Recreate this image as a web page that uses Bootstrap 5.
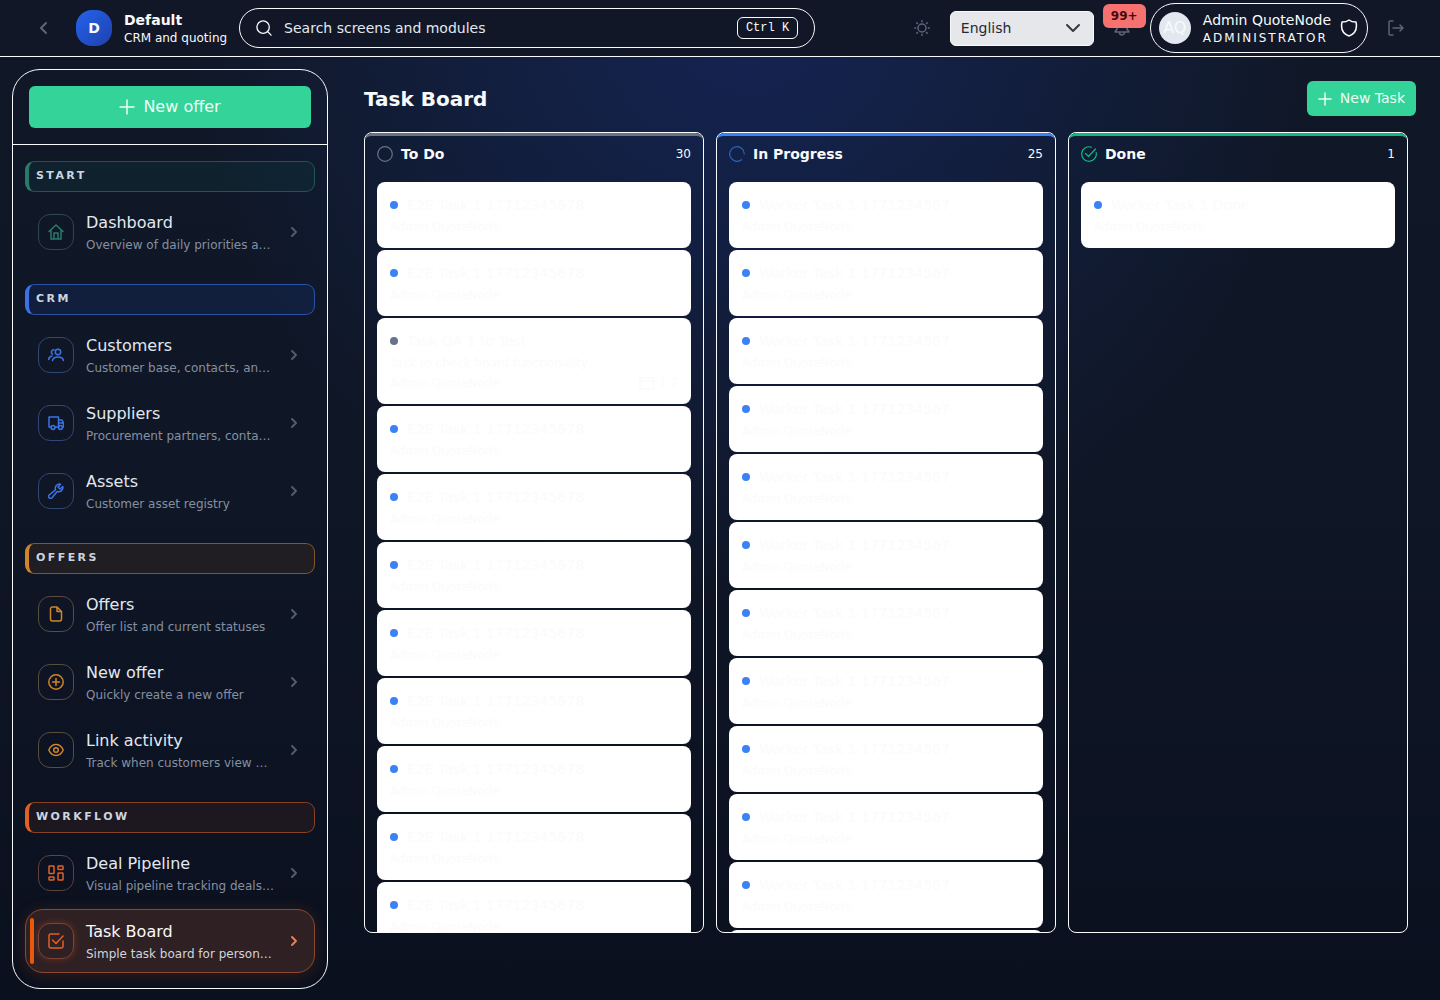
<!DOCTYPE html>
<html lang="en">
<head>
<meta charset="utf-8">
<meta name="viewport" content="width=device-width, initial-scale=1">
<title>Task Board</title>
<link href="https://cdn.jsdelivr.net/npm/bootstrap@5.3.0/dist/css/bootstrap.min.css" rel="stylesheet">
<style>
:root{--ink:#f8fafc;--line:#f8fafc}
body{font-family:"DejaVu Sans",sans-serif;font-size:14px;line-height:20px;color:var(--ink);background:radial-gradient(ellipse 560px 600px at 52% 0,rgba(30,64,175,.32),transparent),linear-gradient(#101828,#0f1626 50%,#0a101e)}
svg{fill:none;stroke:currentColor;stroke-width:1.5;stroke-linecap:round;stroke-linejoin:round;flex-shrink:0;display:block}
a{color:inherit;text-decoration:none}
.app-shell{height:100vh;overflow:hidden}
.topbar{height:57px;background:#111726;border-bottom:1px solid var(--line);padding:0 24px}
.bar-btn{color:#5b6677;width:40px;height:40px;padding:0;border:0;background:none}
.bold-line{stroke-width:2}
.brand-dot{width:36px;height:36px;border-radius:16px;background:linear-gradient(135deg,#2563eb,#1e40af)}
.sub-text{font-size:12px;line-height:16px}
.search-box{width:576px;height:40px;border:1px solid var(--line);border-radius:20px;padding:0 16px}
.search-box input{background:none;border:0;outline:0;color:var(--ink);min-width:0;padding:0;margin-left:12px}
.search-box input::placeholder{color:#e2e8f0;opacity:1}
.key-hint{font:12px/20px "Liberation Mono",monospace;border:1px solid var(--line);border-radius:6px;padding:0 8px;color:var(--ink);background:none}
.lang-select{width:144px;height:35px;font-size:14px;color:#1f2937;border:1px solid #f8fafc;border-radius:6px;padding:0 10px;background-color:#e5e7eb;background-size:16px 16px}
.alert-count{top:-4px;left:1px;background:#f87171;color:#450a0a;font-size:12px;line-height:24px;border-radius:6px;padding:0 8px;font-weight:700}
.user-pill{height:50px;border:1px solid var(--line);border-radius:25px;padding:0 8px;background:none;color:var(--ink)}
.avatar-dot{width:32px;height:32px;background:#e2e8f0;color:#f8fafc;font-size:16px}
.role-text{font-size:12px;line-height:16px;letter-spacing:2px}
.side-panel{width:316px;border:1px solid var(--line);border-radius:28px;margin:12px 0 11px 12px;overflow:hidden}
.side-top{padding:16px;border-bottom:1px solid var(--line)}
.btn-go{background:#34d399;color:#ecfdf5;border:0;border-radius:6px}
.btn-go:hover{background:#2cc48c;color:#fff}
.btn-wide{height:42px;font-size:16px}
.btn-task{height:35px;font-size:14px;padding:0 11px}
.side-nav{padding:16px 12px}
.nav-sec{margin-bottom:20px;color:var(--tone)}
.tone-start{--tone:#2a7a6b;--edge:#2a7a6b99;--wash:#10b98110}
.tone-crm{--tone:#3b73e6;--edge:#3b73e69c;--wash:#2563eb1c}
.tone-offers{--tone:#d08528;--edge:#d0852890;--wash:#d9770618}
.tone-flow{--tone:#df6224;--edge:#df622490;--wash:#ea580c14}
.sec-title{height:31px;margin:0 0 8px;padding:0 7px;border:1px solid var(--edge);border-left:4px solid var(--tone);border-radius:9px;background:var(--wash);color:#cbd5e1;font-size:11px;line-height:27px;font-weight:700;letter-spacing:.22em}
.nav-row{height:64px;margin-bottom:4px;padding:0 12px;border:1px solid transparent;border-radius:18px;position:relative}
.icon-tile{width:36px;height:36px;border:1px solid color-mix(in srgb,var(--tone) 28%,#2c3648);border-radius:12px;flex-shrink:0}
.row-copy{padding-top:2px}
.row-name{font-size:16px;line-height:24px;color:#e2e8f0}
.row-note{font-size:12px;line-height:20px;color:#8490a2}
.row-arrow{color:#525c6c;stroke-width:2}
.nav-row.is-on{background:#2f2024;border-color:#8a4a31;box-shadow:0 2px 16px #ea580c30}
.is-on::before{content:"";position:absolute;left:4px;top:8px;bottom:8px;width:4px;border-radius:2px;background:#ea580c}
.is-on .icon-tile{border-color:#7a4636;box-shadow:0 0 7px #ea580c55}
.is-on .row-name{color:#f8fafc}
.is-on .row-note{color:#d1d5db}
.is-on .row-arrow{color:#e77f52}
.board-main{padding:24px 24px 67px 36px;min-width:0}
.board-main h1{font-size:20px;line-height:28px;font-weight:700}
.lanes{gap:12px;margin-top:16px;padding-right:8px;min-height:0}
.lane{border:1px solid var(--line);border-radius:8px;overflow:hidden;flex:1 1 0;min-width:0}
.lane-head{border-top:3px solid var(--lane);border-radius:7px 7px 0 0;height:49px;padding:0 12px 10px}
.lane-head svg{color:var(--lane);stroke-width:1.2}
.lane-head h2{font-size:14px;line-height:20px;font-weight:700}
.lane-todo{--lane:#6b7280}.lane-prog{--lane:#3b82f6}.lane-done{--lane:#10b981}
.lane-prog svg{color:#2f62bd}
.lane-body{padding:0 12px;overflow:hidden;gap:2px}
.task-card{background:#fff;color:#fbfbfb;border-radius:8px;padding:13px;height:66px;flex-shrink:0}
.task-card.tall-card{height:86px}
.card-line{margin-bottom:2px}
.task-card .sub-text{line-height:20px}
.task-card svg{color:#fafafa}
.state-dot{width:8px;height:8px;border-radius:50%;background:#3b82f6;margin-right:9px}
.tall-card .state-dot{background:#64748b}
</style>
<script src="https://cdn.jsdelivr.net/npm/bootstrap@5.3.0/dist/js/bootstrap.bundle.min.js"></script>
</head>
<body>
<div class="app-shell d-flex flex-column">
<header class="topbar d-flex align-items-center flex-shrink-0">
  <button class="bar-btn d-flex align-items-center justify-content-center" aria-label="Collapse menu"><svg class="bold-line" width="16" height="16" viewBox="0 0 16 16"><path d="M10 3L5 8l5 5"/></svg></button>
  <a href="#" class="d-flex align-items-center ms-2 me-2 pe-1 ps-1">
    <span class="brand-dot d-flex align-items-center justify-content-center fw-bold me-2">D</span>
    <span class="ms-1"><span class="d-block fw-bold">Default</span><span class="d-block sub-text">CRM and quoting</span></span>
  </a>
  <label class="search-box d-flex align-items-center">
    <svg width="16" height="16" viewBox="0 0 18 18"><circle cx="8" cy="8" r="7"/><path d="M13 13l4 4"/></svg>
    <input class="flex-grow-1" type="search" placeholder="Search screens and modules" aria-label="Search screens and modules">
    <kbd class="key-hint">Ctrl K</kbd>
  </label>
  <div class="d-flex align-items-center ms-auto">
    <button class="bar-btn d-flex align-items-center justify-content-center me-2" aria-label="Theme"><svg width="16" height="16" viewBox="0 0 16 16"><circle cx="8" cy="8" r="4"/><path d="M8 .7v1M8 14.300v1M.7 8h1M14.300 8h1M2.800 2.800l.7.7M12.500 12.500l.7.7M13.200 2.800l-.7.7M3.500 12.500l-.7.7"/></svg></button>
    <select class="form-select lang-select" aria-label="Language"><option>English</option></select>
    <div class="position-relative ms-2"><button class="bar-btn d-flex align-items-center justify-content-center" aria-label="Notifications"><svg width="16" height="16" viewBox="0 0 16 16"><path d="M1 12h14l-2-3V6A5 5 0 003 6v3zM5.500 12.500a2.500 2.500 0 005 0"/></svg></button><span class="alert-count position-absolute">99+</span></div>
    <button class="user-pill d-flex align-items-center ms-2 text-start">
      <span class="avatar-dot rounded-circle d-flex align-items-center justify-content-center">AQ</span>
      <span class="ms-2 ps-1"><span class="d-block">Admin QuoteNode</span><span class="d-block role-text">ADMINISTRATOR</span></span>
      <svg class="ms-2" width="20" height="18" viewBox="2 0 20 18"><path d="M12 1c2 1.600 4.500 2 7 2 1.500 7-1.500 12-7 14-5.500-2-8.500-7-7-14 2.500 0 5-.4 7-2z"/></svg>
    </button>
    <button class="bar-btn d-flex align-items-center justify-content-center ms-2" aria-label="Sign out"><svg width="18" height="16" viewBox="0 0 18 16"><path d="M6 1H3a1 1 0 00-1 1v12a1 1 0 001 1h3M6 8h10M13 5l3 3-3 3"/></svg></button>
  </div>
</header>
<div class="d-flex flex-grow-1 overflow-hidden">
  <aside class="side-panel flex-shrink-0 d-flex flex-column">
    <div class="side-top"><button class="btn btn-go btn-wide w-100 d-flex align-items-center justify-content-center gap-2"><svg width="16" height="16" viewBox="0 0 16 16"><path d="M8 1v14M1 8h14"/></svg>New offer</button></div>
    <nav class="side-nav" id="side"></nav>
  </aside>
  <main class="board-main flex-grow-1 d-flex flex-column">
    <div class="d-flex align-items-center justify-content-between"><h1 class="mb-0">Task Board</h1><button class="btn btn-go btn-task d-flex align-items-center gap-2"><svg width="14" height="14" viewBox="0 0 14 14"><path d="M7 1v12M1 7h12"/></svg>New Task</button></div>
    <div class="lanes d-flex flex-grow-1" id="lanes"></div>
  </main>
</div>
</div>
<script>
const icons={
 home:'<path d="M1 7.500L8 1l7 6.500M3 6v9h10V6M6 15V9h4v6"/>',
 people:'<circle cx="10" cy="5" r="2.700"/><path d="M4.500 13.500c.5-2.500 2.500-3.500 5.500-3.500s5 1 5.500 3.500M6 2.800a2.400 2.400 0 00-1.500 4.400M.7 12.500C.8 10.300 2 9.300 4 9"/>',
 truck:'<path d="M3 12H1V2h9.500v10H7M10.500 5H14l1.500 3v4h-1M10.500 8h5"/><circle cx="5" cy="12.500" r="1.900"/><circle cx="12.500" cy="12.500" r="1.900"/>',
 wrench:'<path d="M12.500 1.200a4.300 4.300 0 00-5 5.600L1.200 12a1.900 1.900 0 002.800 2.800l5.200-6.300a4.300 4.300 0 005.600-5L12 6 10 4z"/>',
 file:'<path d="M2.500 3A2 2 0 014.500 1H9l4.500 4.500V13a2 2 0 01-2 2h-7a2 2 0 01-2-2zM9 1v4.500h4.500"/>',
 plus:'<circle cx="8" cy="8" r="7.200"/><path d="M8 4.500v7M4.500 8h7"/>',
 eye:'<path d="M.8 8C4 .8 12 .8 15.200 8 12 15.200 4 15.200.8 8z"/><circle cx="8" cy="8" r="2.300"/>',
 grid:'<rect x="1" y="1" width="5" height="7.500" rx=".6"/><rect x="10" y="1" width="5" height="3.500" rx=".6"/><rect x="1" y="12" width="5" height="3" rx=".6"/><rect x="10" y="8" width="5" height="7" rx=".6"/>',
 check:'<path d="M11 1H3a2 2 0 00-2 2v10a2 2 0 002 2h10a2 2 0 002-2V8M4.500 7L8 10.500 15 3"/>'
};
const menu=[
 ['start','START',[['home','Dashboard','Overview of daily priorities and recent activity']]],
 ['crm','CRM',[['people','Customers','Customer base, contacts, and history'],['truck','Suppliers','Procurement partners, contacts and terms'],['wrench','Assets','Customer asset registry']]],
 ['offers','OFFERS',[['file','Offers','Offer list and current statuses'],['plus','New offer','Quickly create a new offer'],['eye','Link activity','Track when customers view offer links']]],
 ['flow','WORKFLOW',[['grid','Deal Pipeline','Visual pipeline tracking deals by stage'],['check','Task Board','Simple task board for personal work']]]
];
document.getElementById('side').innerHTML=menu.map(([tone,title,rows])=>`<section class="nav-sec tone-${tone}"><h2 class="sec-title">${title}</h2>${rows.map(([ic,name,note])=>`<a href="#" class="nav-row d-flex align-items-center ${name==='Task Board'?'is-on':''}"><span class="icon-tile d-flex align-items-center justify-content-center"><svg width="16" height="16" viewBox="0 0 16 16">${icons[ic]}</svg></span><span class="row-copy flex-grow-1 mx-2 px-1 overflow-hidden"><span class="row-name d-block">${name}</span><span class="row-note d-block text-truncate">${note}</span></span><svg class="row-arrow" width="16" height="16" viewBox="0 0 16 16"><path d="M6 4l4 4-4 4"/></svg></a>`).join('')}</section>`).join('');
const lanes=[
 ['todo','To Do',30,11,'<circle cx="8" cy="8" r="7.300"/>','E2E Task 1 17712345678'],
 ['prog','In Progress',25,12,'<path d="M15.300 8A7.300 7.300 0 1012.500 13.700"/>','Worker Task 1 1771234567'],
 ['done','Done',1,1,'<path d="M10.500 1.200a7.300 7.300 0 104.700 5.500M4.500 7.500L7.500 10.500 14.500 3"/>','Worker Task 1 Done']
];
const due='<span class="d-flex align-items-center gap-1"><svg width="16" height="14" viewBox="0 0 16 14"><path d="M1 2h14v11H1zM1 5h14"/></svg>1.7</span>';
document.getElementById('lanes').innerHTML=lanes.map(([k,name,total,n,ic,text])=>`<section class="lane lane-${k} d-flex flex-column"><div class="lane-head d-flex align-items-center gap-2 flex-shrink-0"><svg width="16" height="16" viewBox="0 0 16 16">${ic}</svg><h2 class="mb-0">${name}</h2><span class="ms-auto sub-text">${total}</span></div><div class="lane-body d-flex flex-column flex-grow-1">${Array.from({length:n},(_,i)=>{const tall=k==='todo'&&i===2;return `<article class="task-card ${tall?'tall-card':''}"><div class="card-line d-flex align-items-center"><span class="state-dot"></span><span>${tall?'Task QA 1 to Test':text}</span></div>${tall?'<div class="sub-text">Task to check board functionality</div>':''}<div class="sub-text d-flex justify-content-between"><span>Admin QuoteNode</span>${tall?due:''}</div></article>`}).join('')}</div></section>`).join('');
</script>
</body>
</html>
